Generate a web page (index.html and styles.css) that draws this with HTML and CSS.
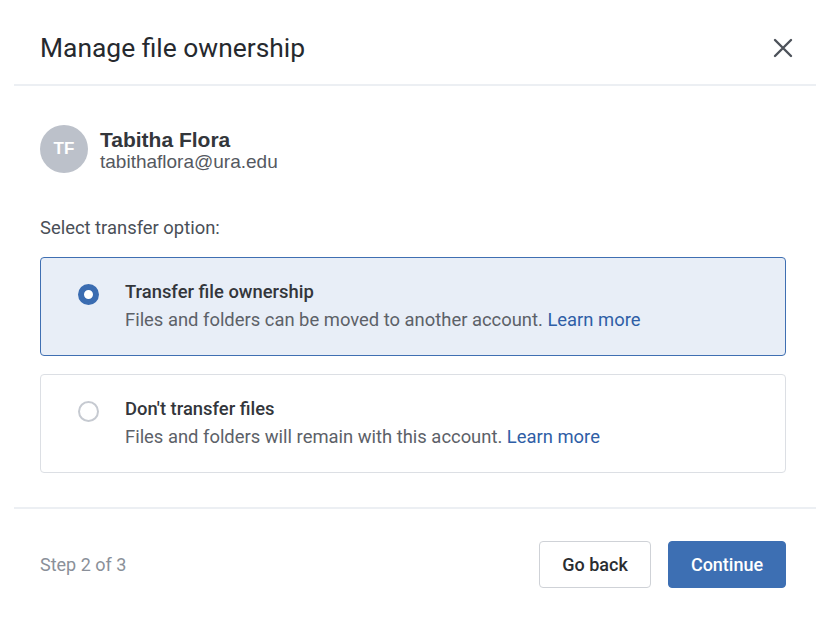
FILE: index.html
```html
<!DOCTYPE html>
<html lang="en">
<head>
<meta charset="utf-8">
<title>Manage file ownership</title>
<link rel="stylesheet" href="styles.css">
</head>
<body>
<div class="dialog">
  <header class="dialog-header">
    <h1 class="dialog-title">Manage file ownership</h1>
    <button class="close-btn" aria-label="Close">
      <svg width="20" height="20" viewBox="0 0 20 20"><path d="M2 2 L18 18 M18 2 L2 18" stroke="#4d525a" stroke-width="2.4" stroke-linecap="round" fill="none"/></svg>
    </button>
  </header>
  <section class="dialog-body">
    <div class="user">
      <div class="avatar">TF</div>
      <div class="user-info">
        <div class="user-name">Tabitha Flora</div>
        <div class="user-email">tabithaflora@ura.edu</div>
      </div>
    </div>
    <div class="select-label">Select transfer option:</div>
    <div class="options">
      <label class="option selected">
        <span class="radio"></span>
        <span class="option-text">
          <span class="option-title">Transfer file ownership</span>
          <span class="option-desc">Files and folders can be moved to another account. <a href="#" class="link">Learn more</a></span>
        </span>
      </label>
      <label class="option">
        <span class="radio"></span>
        <span class="option-text">
          <span class="option-title">Don't transfer files</span>
          <span class="option-desc">Files and folders will remain with this account. <a href="#" class="link">Learn more</a></span>
        </span>
      </label>
    </div>
  </section>
  <footer class="dialog-footer">
    <span class="step">Step 2 of 3</span>
    <div class="actions">
      <button class="btn btn-secondary">Go back</button>
      <button class="btn btn-primary">Continue</button>
    </div>
  </footer>
</div>
</body>
</html>
```
FILE: styles.css
```css
* { box-sizing: border-box; }
html, body { margin: 0; padding: 0; background: #fff; }
body { font-family: Roboto, "Liberation Sans", sans-serif; color: #33373d; }

.dialog { width: 834px; height: 624px; padding: 0 18px 0 14px; }

.dialog-header {
  height: 86px;
  display: flex;
  align-items: center;
  justify-content: space-between;
  padding: 12px 23px 0 26px;
  border-bottom: 2px solid #eceff3;
}
.dialog-title {
  margin: 0;
  font-size: 26.4px;
  font-weight: 400;
  color: #26292e;
  line-height: 32px;
}
.close-btn {
  border: 0; background: none; padding: 0; width: 20px; height: 20px;
  display: flex; cursor: pointer;
}

.dialog-body { padding: 38px 30px 34px 26px; border-bottom: 2px solid #eceff3; }

.user { display: flex; align-items: center; gap: 12px; }
.avatar {
  width: 48px; height: 48px; border-radius: 50%;
  background: #bcc1ca; color: #fff;
  display: flex; align-items: center; justify-content: center;
  font-family: "Liberation Sans", Arial, sans-serif; font-weight: 700; font-size: 17px;
}
.user-info { display: flex; flex-direction: column; padding-top: 5px; }
.user-name { font-family: "Liberation Sans", Arial, sans-serif; font-weight: 700; font-size: 21px; color: #33363b; line-height: 22px; }
.user-email { font-family: "Liberation Sans", Arial, sans-serif; font-size: 19px; color: #55595f; line-height: 22px; }

.select-label { margin-top: 43px; font-size: 18.4px; color: #4a4f57; line-height: 24px; }

.options { margin-top: 17px; display: flex; flex-direction: column; gap: 18px; }
.option {
  display: flex; align-items: flex-start; gap: 26px;
  height: 99px;
  padding: 22px 37px;
  border: 1px solid #dcdfe4;
  border-radius: 4px;
  background: #fff;
  cursor: pointer;
}
.option.selected { background: #e8eef7; border-color: #3f6fb2; }
.radio {
  flex: none;
  width: 21px; height: 21px; margin-top: 4px;
  border-radius: 50%;
  border: 2px solid #c6cad1;
  background: #fff;
}
.option.selected .radio { border: 6px solid #3a6cb1; }
.option-text { display: flex; flex-direction: column; }
.option-title { font-size: 18.4px; font-weight: 500; color: #33363b; line-height: 24px; }
.option-desc { font-size: 18.4px; color: #5c6168; line-height: 24px; margin-top: 4px; }
.link { color: #2f5ea6; text-decoration: none; }

.dialog-footer {
  display: flex; align-items: center; justify-content: space-between;
  padding: 32px 30px 0 26px;
}
.step { font-size: 18px; color: #8a9099; }
.actions { display: flex; gap: 17px; }
.btn {
  height: 47px; border-radius: 4px; font-family: Roboto, sans-serif; font-size: 18px; font-weight: 500; cursor: pointer; padding: 0;
}
.btn-secondary { width: 112px; background: #fff; border: 1px solid #cfd2d7; color: #2a2d31; }
.btn-primary { width: 118px; background: #3d6fb3; border: 1px solid #3d6fb3; color: #fff; }
```
